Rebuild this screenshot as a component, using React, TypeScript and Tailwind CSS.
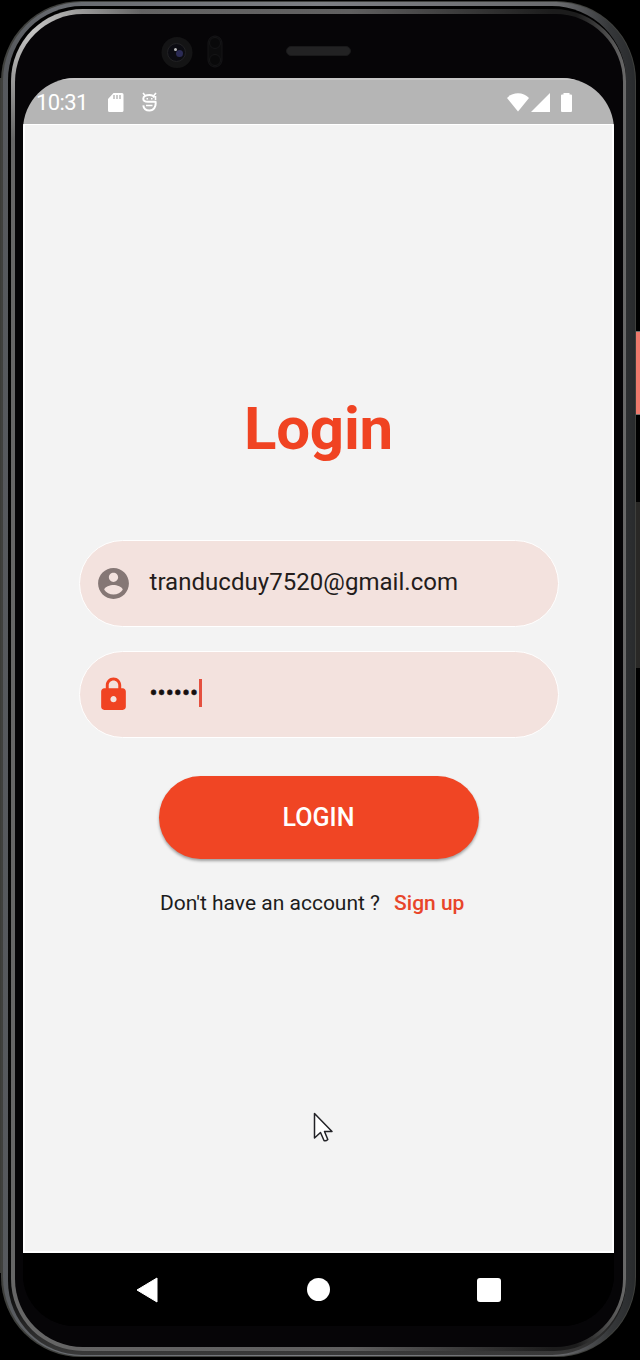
import React from "react";

function StatusBar() {
  return (
    <div className="flex h-[46px] shrink-0 items-center justify-between border-t-2 border-[#c6c6c6] bg-[#b5b5b5] pl-[13px] pr-[42px] text-white">
      <div className="flex items-center">
        <span className="w-[51px] whitespace-nowrap pt-[2px] text-[22px] leading-none tracking-[-0.6px]">10:31</span>
        <svg className="ml-[21px] h-[19px] w-[16px]" viewBox="0 0 16 19">
          <path d="M5.500 0H14a1.500 1.500 0 0 1 1.500 1.500v16A1.500 1.500 0 0 1 14 19H1.500A1.500 1.500 0 0 1 0 17.500V6Z" fill="#fff" />
          <path d="M6 2v4M9 2v4M12 2v4" stroke="#b5b5b5" strokeWidth="1.400" />
        </svg>
        <svg className="ml-[18px] h-[20px] w-[15px]" viewBox="0 0 15 20" fill="none" stroke="#fff" strokeWidth="2">
          <path d="M12.500 5.500C11.500 3.700 9.800 3 7.500 3 4 3 1.300 4.200 1.300 6.700 1.300 9 3 9.700 6 9.700h7.500c.8 4.500-1.500 8.800-6 8.800-3.500 0-5.800-2-6.200-5.200" />
          <path d="M1 1 3.500 4M14 1 11.500 4M13.500 4v4" strokeWidth="1.600" />
          <path d="M4.500 6.700h1.500M9 6.700h1.500M4 13.500h6.500" strokeWidth="1.600" />
        </svg>
      </div>
      <div className="flex items-center">
        <svg className="h-[19px] w-[22px]" viewBox="0 0 22 19">
          <path d="M0 5C5.500-1.300 16.500-1.300 22 5L11 18.500Z" fill="#fff" />
        </svg>
        <svg className="ml-[2px] h-[19px] w-[19px]" viewBox="0 0 19 19">
          <path d="M19 0V19H0Z" fill="#fff" />
        </svg>
        <svg className="ml-[11px] h-[19px] w-[11px]" viewBox="0 0 11 19">
          <path d="M2.500 0h6v1.500H10a1 1 0 0 1 1 1V18a1 1 0 0 1-1 1H1a1 1 0 0 1-1-1V2.500a1 1 0 0 1 1-1h1.500Z" fill="#fff" />
        </svg>
      </div>
    </div>
  );
}

function Field({ icon, children }: { icon: React.ReactNode; children: React.ReactNode }) {
  return (
    <div className="flex h-[87px] w-[480px] items-center rounded-full border border-white bg-[#f3e2de] pl-[15px]">
      <div className="flex w-[38px] justify-center">{icon}</div>
      {children}
    </div>
  );
}

function LoginForm() {
  return (
    <div className="relative flex grow flex-col items-center border-x-2 border-b-2 border-t border-white bg-[#f3f3f3] pt-[269px]">
      <h1 className="text-[60px] font-bold leading-[70px] tracking-[-0.2px] text-[#f04322]">Login</h1>
      <div className="mt-[76px] flex flex-col gap-[24px]">
        <Field
          icon={
            <svg className="h-[37px] w-[37px]" viewBox="0 0 24 24" fill="#857775">
              <path d="M12 2C6.480 2 2 6.480 2 12s4.480 10 10 10 10-4.480 10-10S17.520 2 12 2zm0 3c1.660 0 3 1.340 3 3s-1.340 3-3 3-3-1.340-3-3 1.340-3 3-3zm0 14.200c-2.500 0-4.710-1.280-6-3.220.030-1.990 4-3.080 6-3.080 1.990 0 5.970 1.090 6 3.080-1.290 1.940-3.500 3.220-6 3.220z" />
            </svg>
          }
        >
          <span className="ml-[17px] pb-[3px] text-[24px] leading-[28px] tracking-[0.04px] text-[#231c1b]">tranducduy7520@gmail.com</span>
        </Field>
        <Field
          icon={
            <svg className="h-[37px] w-[37px]" viewBox="0 0 24 24" fill="#f04322">
              <path d="M18 8h-1V6c0-2.760-2.240-5-5-5S7 3.240 7 6v2H6c-1.100 0-2 .9-2 2v10c0 1.100.9 2 2 2h12c1.100 0 2-.9 2-2V10c0-1.100-.9-2-2-2zm-6 9c-1.100 0-2-.9-2-2s.9-2 2-2 2 .9 2 2-.9 2-2 2zm3.100-9H8.900V6c0-1.710 1.390-3.100 3.100-3.100 1.710 0 3.100 1.390 3.100 3.100v2z" />
            </svg>
          }
        >
          <span className="ml-[17px] w-[49px] pb-[4px] text-[24px] leading-[28px] text-[#171010] [-webkit-text-stroke:0.5px_#171010]">••••••</span>
          <span className="mb-[3px] h-[28px] w-[3px] bg-[#e5503f]" />
        </Field>
      </div>
      <button className="mt-[38px] h-[83px] w-[320px] rounded-full bg-[#f04524] text-[25px] font-medium text-white shadow-[0_2px_3px_rgba(0,0,0,0.35)]">
        LOGIN
      </button>
      <p className="mt-[31px] flex w-[317px] gap-[14px] whitespace-nowrap text-[21px] leading-[26px] text-[#1c1c1c]">
        <span>Don't have an account ?</span>
        <span className="font-medium text-[#e8452a]">Sign up</span>
      </p>
      <svg className="absolute left-[288px] top-[987px] h-[32px] w-[21px]" viewBox="0 0 21 32">
        <path d="M1.500 1.500V26L7.500 20.500l3.500 8q1.800 1 3.800-1L11.500 19.500H19Z" fill="#fff" stroke="#222226" strokeWidth="1.500" strokeLinejoin="round" />
      </svg>
    </div>
  );
}

function NavBar() {
  return (
    <div className="flex h-[73px] shrink-0 items-center bg-black pl-[113px]">
      <svg className="h-[26px] w-[22px]" viewBox="0 0 22 26">
        <path d="M21 1v24L1 13Z" fill="#fff" stroke="#fff" strokeLinejoin="round" />
      </svg>
      <span className="ml-[149px] h-[23px] w-[23px] rounded-full bg-white" />
      <span className="ml-[147px] h-[24px] w-[24px] rounded-[3px] bg-white" />
    </div>
  );
}

function Camera() {
  return (
    <div className="flex h-[64px] shrink-0 items-start">
      <svg className="ml-[137px] mt-[20px] h-[36px] w-[66px]" viewBox="0 0 66 36">
        <circle cx="17" cy="18.500" r="15.500" fill="#141415" />
        <circle cx="16.500" cy="18.500" r="9" fill="#0c0c12" stroke="#222224" />
        <circle cx="19.500" cy="19.500" r="3.500" fill="#2b2b55" />
        <circle cx="15.500" cy="15.500" r="1.500" fill="#bbb" />
        <rect x="48" y="2" width="14" height="31" rx="7" fill="#0c0c0d" stroke="#151517" />
        <circle cx="55" cy="9" r="5.500" fill="#09090a" stroke="#151517" />
        <circle cx="55" cy="26" r="5.500" fill="#09090a" stroke="#151517" />
      </svg>
      <div className="ml-[60px] mt-[32px] h-[10px] w-[65px] rounded-full border border-[#19191a] bg-[#222223]" />
    </div>
  );
}

export default function App() {
  return (
    <div className="relative h-[1360px] w-[640px] overflow-hidden bg-black pl-px pt-px font-['Roboto',sans-serif]">
      <div className="absolute left-[635px] top-[331px] h-[84px] w-[5px] border-y border-l border-[#77716f] bg-[#ef796c]" />
      <div className="absolute left-[635px] top-[501px] h-[167px] w-[5px] border-t border-black bg-[#292826]" />
      <div className="absolute left-0 top-[78px] h-[1195px] w-[3px] bg-[#3b3c38]" />
      <div className="relative h-[1356px] w-[635px] rounded-[80px] bg-[#3f403d] pb-px pl-[2px] pr-px pt-px">
        <div className="h-full rounded-[79px] bg-[linear-gradient(90deg,#55585c_0%,#66696e_8%,#7d7f84_50%,#6a6b6e_88%,#36383a_96%,#292b2d_100%)] pb-px pl-[5px] pr-[9px] pt-[4px]">
          <div className="h-full rounded-[74px] bg-[linear-gradient(180deg,#000_0%,#0a0a0a_95%,#3a3a3a_100%)] pb-[4px] pl-[3px] pt-[3px]">
            <div className="h-full rounded-[72px] bg-[radial-gradient(circle_at_22px_22px,#c4c4c3_0px,#a5a5a4_40px,transparent_110px),linear-gradient(90deg,#666_0%,#606060_55%,#1c1c1c_88%,#1c1c1c_92%,#6a6a6a_100%)] bg-[#606060] pb-[4px] pl-[4px] pr-[3px] pt-[5px]">
              <div className="flex h-full flex-col rounded-[68px] bg-[#060507] pl-[8px] pr-[9px]">
                <Camera />
                <div className="flex h-[1248px] flex-col overflow-hidden rounded-[52px] bg-black">
                  <StatusBar />
                  <LoginForm />
                  <NavBar />
                </div>
              </div>
            </div>
          </div>
        </div>
      </div>
    </div>
  );
}
